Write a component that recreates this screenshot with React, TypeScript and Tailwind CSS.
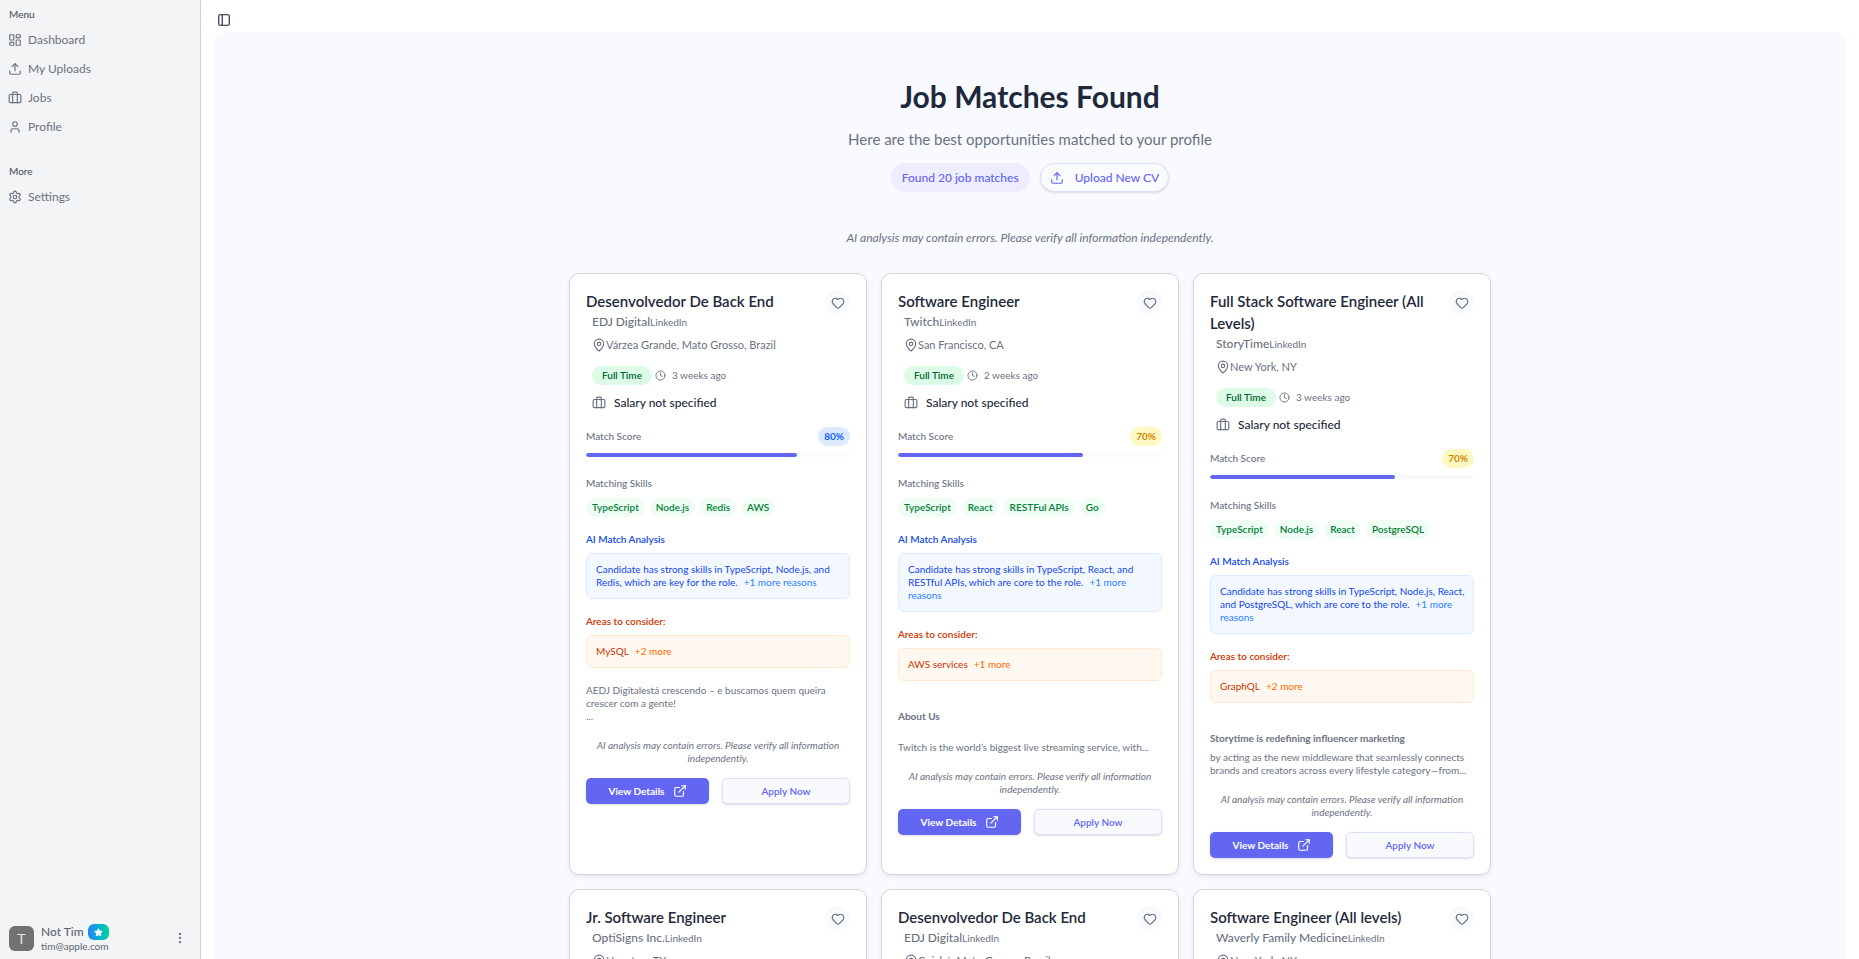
import {
  Briefcase,
  Clock,
  EllipsisVertical,
  ExternalLink,
  Heart,
  LayoutDashboard,
  MapPin,
  PanelLeft,
  Settings,
  Star,
  Upload,
  User,
  type LucideIcon,
} from "lucide-react";

type Job = {
  title: string;
  company: string;
  location: string;
  posted: string;
  score: number;
  skills: string[];
  analysis: string;
  moreReasons: string;
  gap: string;
  moreGaps: string;
  heading?: string;
  headingSpaced?: boolean;
  body: string[];
};

const jobs: Job[] = [
  {
    title: "Desenvolvedor De Back End",
    company: "EDJ Digital",
    location: "Várzea Grande, Mato Grosso, Brazil",
    posted: "3 weeks ago",
    score: 80,
    skills: ["TypeScript", "Node.js", "Redis", "AWS"],
    analysis: "Candidate has strong skills in TypeScript, Node.js, and Redis, which are key for the role.",
    moreReasons: "+1 more reasons",
    gap: "MySQL",
    moreGaps: "+2 more",
    body: ["AEDJ Digitalestá crescendo – e buscamos quem queira crescer com a gente!", "..."],
  },
  {
    title: "Software Engineer",
    company: "Twitch",
    location: "San Francisco, CA",
    posted: "2 weeks ago",
    score: 70,
    skills: ["TypeScript", "React", "RESTFul APIs", "Go"],
    analysis: "Candidate has strong skills in TypeScript, React, and RESTful APIs, which are core to the role.",
    moreReasons: "+1 more reasons",
    gap: "AWS services",
    moreGaps: "+1 more",
    heading: "About Us",
    headingSpaced: true,
    body: ["Twitch is the world’s biggest live streaming service, with..."],
  },
  {
    title: "Full Stack Software Engineer (All Levels)",
    company: "StoryTime",
    location: "New York, NY",
    posted: "3 weeks ago",
    score: 70,
    skills: ["TypeScript", "Node.js", "React", "PostgreSQL"],
    analysis: "Candidate has strong skills in TypeScript, Node.js, React, and PostgreSQL, which are core to the role.",
    moreReasons: "+1 more reasons",
    gap: "GraphQL",
    moreGaps: "+2 more",
    heading: "Storytime is redefining influencer marketing",
    body: ["by acting as the new middleware that seamlessly connects brands and creators across every lifestyle category—from..."],
  },
  {
    title: "Jr. Software Engineer",
    company: "OptiSigns Inc.",
    location: "Houston, TX",
    posted: "2 weeks ago",
    score: 70,
    skills: ["TypeScript", "Node.js", "React"],
    analysis: "Candidate has strong skills in TypeScript, Node.js, and React.",
    moreReasons: "+1 more reasons",
    gap: "GraphQL",
    moreGaps: "+1 more",
    body: [],
  },
  {
    title: "Desenvolvedor De Back End",
    company: "EDJ Digital",
    location: "Cuiabá, Mato Grosso, Brazil",
    posted: "3 weeks ago",
    score: 70,
    skills: ["TypeScript", "Node.js", "Redis"],
    analysis: "Candidate has strong skills in TypeScript, Node.js, and Redis.",
    moreReasons: "+1 more reasons",
    gap: "MySQL",
    moreGaps: "+2 more",
    body: [],
  },
  {
    title: "Software Engineer (All levels)",
    company: "Waverly Family Medicine",
    location: "New York, NY",
    posted: "3 weeks ago",
    score: 70,
    skills: ["TypeScript", "React", "PostgreSQL"],
    analysis: "Candidate has strong skills in TypeScript, React, and PostgreSQL.",
    moreReasons: "+1 more reasons",
    gap: "GraphQL",
    moreGaps: "+1 more",
    body: [],
  },
];

function NavItem({ icon: Icon, label }: { icon: LucideIcon; label: string }) {
  return (
    <li>
      <a href="#" className="flex h-[29px] items-center gap-[6px] px-2 text-[12px] leading-[16px] text-[#6b7280]">
        <Icon className="size-3.5 shrink-0" />
        {label}
      </a>
    </li>
  );
}

function Sidebar() {
  return (
    <aside className="sticky top-0 flex h-screen w-[201px] shrink-0 flex-col border-r border-[#cfd3dc] bg-[#f3f4f6]">
      <nav>
        <h2 className="px-[9px] pt-[7px] pb-1 text-[10px] leading-[14px] font-medium text-[#4b5563]">Menu</h2>
        <ul>
          <NavItem icon={LayoutDashboard} label="Dashboard" />
          <NavItem icon={Upload} label="My Uploads" />
          <NavItem icon={Briefcase} label="Jobs" />
          <NavItem icon={User} label="Profile" />
        </ul>
        <h2 className="px-[9px] pt-[23px] pb-1 text-[10px] leading-[14px] font-medium text-[#4b5563]">More</h2>
        <ul>
          <NavItem icon={Settings} label="Settings" />
        </ul>
      </nav>
      <div className="mt-auto flex items-center gap-[7px] px-[9px] pb-[7px]">
        <span className="flex size-[25px] items-center justify-center rounded-md bg-[#717171] text-[14px] text-[#e5e7eb]">T</span>
        <div className="flex-1 text-[#5f6774]">
          <div className="flex items-center gap-1 text-[12px] leading-[14px] font-medium">
            Not Tim
            <span className="flex h-4 w-[21px] items-center justify-center rounded-md bg-linear-to-r from-[#2b7fff] to-[#00d492] text-white">
              <Star className="size-[9px]" fill="currentColor" />
            </span>
          </div>
          <div className="text-[10px] leading-[12px]">tim@apple.com</div>
        </div>
        <button type="button" aria-label="Account options" className="mr-1 text-[#6b7280]">
          <EllipsisVertical className="size-3.5" />
        </button>
      </div>
    </aside>
  );
}

function JobCard({ job }: { job: Job }) {
  const scoreColor = job.score >= 80 ? "bg-[#dbeafe] text-[#155dfc]" : "bg-[#fef9c2] text-[#d08700]";
  return (
    <article className="rounded-[10px] border border-[#d1d5dc] bg-white p-4 text-[10px] leading-[13px] text-[#6a7282] shadow-[0_2px_4px_rgba(0,0,0,0.08)]">
      <div className="flex items-start justify-between gap-3">
        <div>
          <h2 className="text-[15px] leading-[22px] font-semibold text-[#1e293b]">{job.title}</h2>
          <p className="flex items-baseline pl-[6px] text-[12px] leading-[20px] font-medium">
            {job.company}
            <span className="text-[10px] font-normal">LinkedIn</span>
          </p>
        </div>
        <button type="button" aria-label="Save job" className="flex size-[25px] shrink-0 items-center justify-center rounded-full bg-[#f9fafe]">
          <Heart className="size-3.5" />
        </button>
      </div>

      <div className="pl-[6px]">
        <p className="mt-1 flex items-center text-[11px] leading-[18px]">
          <MapPin className="size-3.5" />
          {job.location}
        </p>
        <div className="mt-3 flex items-center">
          <span className="rounded-full bg-[#dcfce7] px-[10px] leading-[19px] font-semibold text-[#016630]">Full Time</span>
          <Clock className="ml-[3px] size-[11px]" />
          <span className="ml-[6px]">{job.posted}</span>
        </div>
        <p className="mt-[9px] flex items-center gap-2 text-[12px] leading-[18px] font-medium text-[#1e293b]">
          <Briefcase className="size-3.5 text-[#6a7282]" />
          Salary not specified
        </p>
      </div>

      <div className="mt-[15px] flex items-center justify-between font-medium">
        Match Score
        <span className={`rounded-full px-[6px] leading-[19px] font-bold ${scoreColor}`}>{job.score}%</span>
      </div>
      <div className="mt-[7px] h-1 overflow-hidden rounded-full bg-[#f9fafe]">
        <div className="h-full rounded-full bg-[#6366f1]" style={{ width: `${job.score}%` }} />
      </div>

      <h3 className="mt-5 font-medium">Matching Skills</h3>
      <ul className="mt-2 flex gap-[5px] font-semibold text-[#008236]">
        {job.skills.map((skill) => (
          <li key={skill} className="rounded-full bg-[#f0fdf4] px-[6px] leading-[19px]">{skill}</li>
        ))}
      </ul>

      <h3 className="mt-4 font-semibold text-[#1447e6]">AI Match Analysis</h3>
      <p className="mt-[7px] rounded-md border border-[#dbeafe] bg-[#f3f8ff] py-[9px] pr-[7px] pl-[9px] text-[#1447e6]">
        {job.analysis}
        <span className="ml-[6px] text-[#2b7fff]">{job.moreReasons}</span>
      </p>

      <h3 className="mt-4 font-semibold text-[#ca3500]">Areas to consider:</h3>
      <p className="mt-[7px] rounded-md border border-[#ffe8cf] bg-[#fff8f0] p-[9px] text-[#ca3500]">
        {job.gap}
        <span className="ml-[6px] text-[#ff6900]">{job.moreGaps}</span>
      </p>

      <div className="mt-4">
        {job.heading && (
          <h3 className={job.headingSpaced ? "mb-[18px] pt-[13px] font-bold" : "mb-[6px] pt-[13px] font-bold"}>{job.heading}</h3>
        )}
        {job.body.map((line) => (
          <p key={line}>{line}</p>
        ))}
      </div>

      <p className="mt-4 text-center italic">AI analysis may contain errors. Please verify all information independently.</p>
      <div className="mt-[13px] flex gap-[13px] font-semibold">
        <button type="button" className="flex h-[26px] w-[123px] items-center justify-center gap-2 rounded-[5px] bg-[#6366f1] font-bold text-white shadow-sm">
          View Details
          <ExternalLink className="size-3.5" />
        </button>
        <button type="button" className="h-[26px] flex-1 rounded-[5px] border border-[#dddefb] bg-[#f9fafe] text-[#6366f1] shadow-sm">
          Apply Now
        </button>
      </div>
    </article>
  );
}

export default function App() {
  return (
    <div className="flex h-screen overflow-hidden bg-white font-['Lato',sans-serif]">
      <Sidebar />
      <main className="min-w-0 flex-1 px-[13px]">
        <header className="flex h-8 items-end pb-[5px] pl-[3px]">
          <button type="button" aria-label="Toggle sidebar" className="text-[#1e293b]">
            <PanelLeft className="size-3.5" />
          </button>
        </header>
        <div className="rounded-[10px] bg-[#f9faff] pt-[46px]">
          <div className="flex flex-col items-center text-center">
            <h1 className="text-[30px] leading-[36px] font-bold text-[#1e293b]">Job Matches Found</h1>
            <p className="mt-[14px] text-[15px] leading-[22px] text-[#6a7282]">Here are the best opportunities matched to your profile</p>
            <div className="mt-[13px] flex gap-[10px] text-[12px] font-medium text-[#6366f1]">
              <span className="flex h-[29px] items-center rounded-full bg-[#ededfd] px-[11px]">Found 20 job matches</span>
              <button type="button" className="flex h-[29px] items-center gap-[11px] rounded-full border border-[#dddefb] bg-[#fafbff] px-[9px] shadow-sm">
                <Upload className="size-3.5" />
                Upload New CV
              </button>
            </div>
            <p className="mt-[37px] text-[12px] leading-[18px] text-[#6a7282] italic">
              AI analysis may contain errors. Please verify all information independently.
            </p>
          </div>
          <div className="mx-auto mt-[26px] grid max-w-[922px] grid-cols-3 gap-[14px]">
            {jobs.map((job, i) => (
              <JobCard key={i} job={job} />
            ))}
          </div>
        </div>
      </main>
    </div>
  );
}
